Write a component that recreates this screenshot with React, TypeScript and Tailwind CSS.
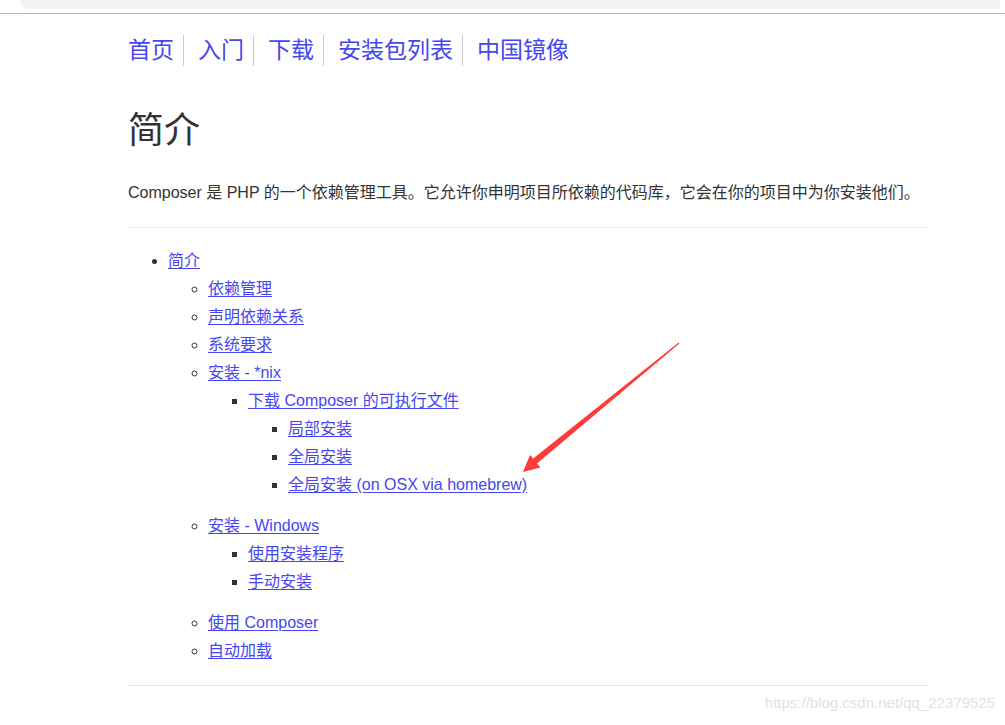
type Item = { label: string; children?: Item[] }

const toc: Item[] = [
  {
    label: '简介',
    children: [
      { label: '依赖管理' },
      { label: '声明依赖关系' },
      { label: '系统要求' },
      {
        label: '安装 - *nix',
        children: [
          {
            label: '下载 Composer 的可执行文件',
            children: [
              { label: '局部安装' },
              { label: '全局安装' },
              { label: '全局安装 (on OSX via homebrew)' },
            ],
          },
        ],
      },
      {
        label: '安装 - Windows',
        children: [{ label: '使用安装程序' }, { label: '手动安装' }],
      },
      { label: '使用 Composer' },
      { label: '自动加载' },
    ],
  },
]

const navItems = ['首页', '入门', '下载', '安装包列表', '中国镜像']

function TocList({ items, depth }: { items: Item[]; depth: number }) {
  let listClass = 'list-disc'
  if (depth === 2) listClass = 'list-[circle]'
  if (depth >= 3) listClass = 'list-[square]'

  return (
    <ul className={`${listClass} pl-10 ${depth === 3 ? 'mb-[13px]' : ''}`}>
      {items.map((item) => (
        <li key={item.label} className="leading-[28px] marker:text-[#333]">
          <a href="#" className="text-[#4646f0] underline underline-offset-2">
            {item.label}
          </a>
          {item.children && <TocList items={item.children} depth={depth + 1} />}
        </li>
      ))}
    </ul>
  )
}

export default function App() {
  return (
    <div
      className="relative h-[725px] w-[1005px] overflow-hidden bg-white text-[#333]"
      style={{ fontFamily: '"Liberation Sans", "Noto Sans CJK SC", sans-serif' }}
    >
      {/* browser chrome remnant */}
      <div className="h-[14px] border-b border-[#b8b8b8]">
        <div className="ml-[20px] mr-[5px] h-[9px] rounded-bl-[10px] bg-[#f1f3f4]" />
      </div>

      <div className="ml-[128px] w-[800px]">
        {/* nav */}
        <nav className="mt-[21px] flex text-[23px] leading-[31px] text-[#4646f0]">
          {navItems.map((label, i) => (
            <a
              key={label}
              href="#"
              className={`${i === 0 ? '' : 'pl-[14px]'} ${
                i === navItems.length - 1 ? '' : 'border-r border-[#ccc] pr-[9px]'
              }`}
            >
              {label}
            </a>
          ))}
        </nav>

        <h1 className="mt-[45px] text-[36px] leading-[40px] font-normal">简介</h1>

        <p className="mt-[30px] text-[16px] leading-[24px]">
          Composer 是 PHP 的一个依赖管理工具。它允许你申明项目所依赖的代码库，它会在你的项目中为你安装他们。
        </p>

        <hr className="mt-[22px] border-t border-[#eee]" />

        <div className="mt-[19px] text-[16px]">
          <TocList items={toc} depth={1} />
        </div>

        <hr className="mt-[20px] border-t border-[#e5e5e5]" />
      </div>

      {/* annotation arrow */}
      <svg
        className="pointer-events-none absolute left-0 top-0"
        width="1005"
        height="725"
        viewBox="0 0 1005 725"
      >
        <polygon
          points="679.4,343.4 537,463.5 540.5,467.5 523,472 530,455 533.2,458.6 678.6,342.6"
          fill="#ff3a3a"
        />
      </svg>

      {/* watermark */}
      <div className="absolute right-[10px] top-[694px] text-[15px] leading-[18px] text-[#e2e2e2]">
        https://blog.csdn.net/qq_22379525
      </div>
    </div>
  )
}
